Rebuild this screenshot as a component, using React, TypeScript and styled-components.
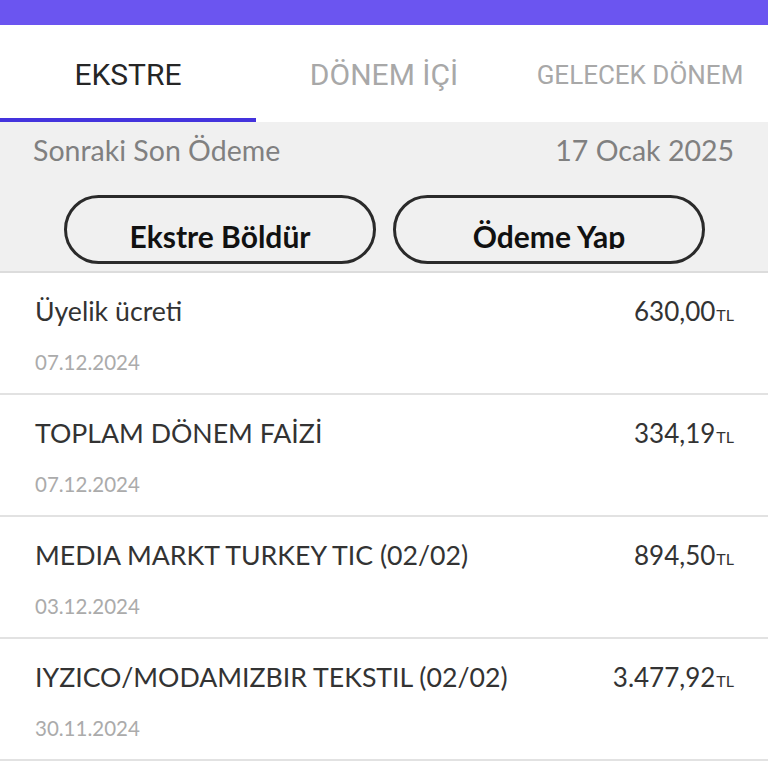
import React, { FC } from 'react';
import styled, { createGlobalStyle } from 'styled-components';

const GlobalStyle = createGlobalStyle`
  html, body { margin: 0; padding: 0; background: #ffffff; }
  body { font-family: Lato, "Noto Sans", sans-serif; }
  * { box-sizing: border-box; }
`;

const Page = styled.div`
  width: 768px;
  height: 768px;
  overflow: hidden;
  background: #ffffff;
`;

const TopBar = styled.div`
  height: 25px;
  background: #6b55f0;
`;

const Tabs = styled.div`
  display: grid;
  grid-template-columns: repeat(3, 1fr);
  height: 97px;
  background: #ffffff;
`;

const Tab = styled.div<{ active?: boolean; small?: boolean }>`
  display: flex;
  align-items: center;
  justify-content: center;
  padding-top: 6px;
  font-family: Roboto, sans-serif;
  font-size: ${p => (p.small ? '26px' : '30px')};
  color: ${p => (p.active ? '#262626' : '#a8a8a8')};
  border-bottom: 4px solid ${p => (p.active ? '#4433dd' : 'transparent')};
  white-space: nowrap;
`;

const Summary = styled.div`
  background: #f0f0f0;
  padding: 8px 34px 0 33px;
  height: 151px;
  border-bottom: 2px solid #dcdcdc;
`;

const SummaryLine = styled.div`
  display: flex;
  justify-content: space-between;
  align-items: center;
  font-size: 28.5px;
  color: #808080;
  height: 40px;
`;

const Buttons = styled.div`
  display: flex;
  gap: 17px;
  margin: 25px 0 0 31px;
`;

const PillButton = styled.div`
  width: 312px;
  height: 69px;
  border: 3px solid #2a2a2a;
  border-radius: 35px;
  display: flex;
  justify-content: center;
  align-items: flex-start;
  padding-top: 20px;
  overflow: hidden;
  font-size: 30px;
  font-weight: 700;
  color: #111111;
`;

const ButtonLabel = styled.span`
  display: block;
  height: 31px;
  line-height: 36px;
  overflow: hidden;
`;

const Row = styled.div`
  height: 122px;
  padding: 22px 34px 0 35px;
  border-bottom: 2px solid #e2e2e2;
`;

const RowTop = styled.div`
  display: flex;
  justify-content: space-between;
  align-items: baseline;
`;

const Title = styled.div`
  font-size: 26.7px;
  color: #333333;
`;

const Amount = styled.div`
  font-size: 26px;
  color: #333333;
`;

const Currency = styled.span`
  font-size: 16px;
  margin-left: 1px;
`;

const DateText = styled.div`
  margin-top: 23px;
  font-size: 20.5px;
  color: #ababab;
`;

const items = [
  { title: 'Üyelik ücreti', date: '07.12.2024', amount: '630,00' },
  { title: 'TOPLAM DÖNEM FAİZİ', date: '07.12.2024', amount: '334,19' },
  { title: 'MEDIA MARKT TURKEY TIC (02/02)', date: '03.12.2024', amount: '894,50' },
  { title: 'IYZICO/MODAMIZBIR TEKSTIL (02/02)', date: '30.11.2024', amount: '3.477,92' },
];

const App: FC = () => {
  return (
    <Page>
      <GlobalStyle />
      <TopBar />
      <Tabs>
        <Tab active>EKSTRE</Tab>
        <Tab>DÖNEM İÇİ</Tab>
        <Tab small>GELECEK DÖNEM</Tab>
      </Tabs>
      <Summary>
        <SummaryLine>
          <span>Sonraki Son Ödeme</span>
          <span>17 Ocak 2025</span>
        </SummaryLine>
        <Buttons>
          <PillButton><ButtonLabel>Ekstre Böldür</ButtonLabel></PillButton>
          <PillButton><ButtonLabel>Ödeme Yap</ButtonLabel></PillButton>
        </Buttons>
      </Summary>
      {items.map(item => (
        <Row key={item.title}>
          <RowTop>
            <Title>{item.title}</Title>
            <Amount>{item.amount}<Currency>TL</Currency></Amount>
          </RowTop>
          <DateText>{item.date}</DateText>
        </Row>
      ))}
    </Page>
  );
};

export default App;
